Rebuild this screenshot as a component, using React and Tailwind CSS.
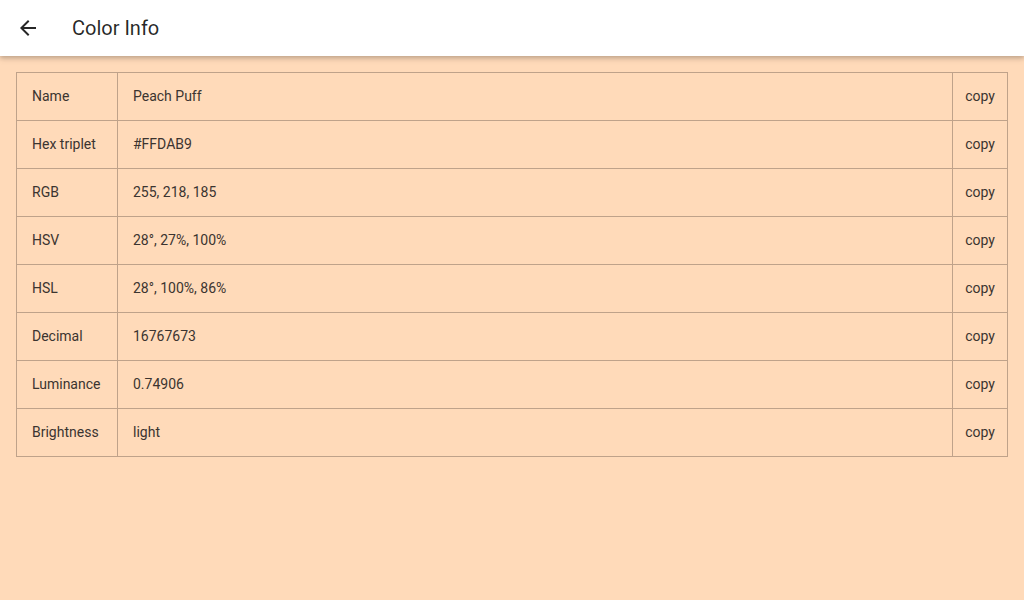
const rows = [
  ['Name', 'Peach Puff'],
  ['Hex triplet', '#FFDAB9'],
  ['RGB', '255, 218, 185'],
  ['HSV', '28°, 27%, 100%'],
  ['HSL', '28°, 100%, 86%'],
  ['Decimal', '16767673'],
  ['Luminance', '0.74906'],
  ['Brightness', 'light'],
];

export default function App() {
  return (
    <div className="w-[1024px] h-[600px] bg-[#ffdab9] flex flex-col overflow-hidden" style={{ fontFamily: 'Roboto, "Noto Sans", sans-serif' }}>
      {/* app bar */}
      <header className="relative z-10 h-14 shrink-0 bg-white flex items-center px-4 shadow-[0_2px_4px_rgba(0,0,0,0.18),0_4px_6px_rgba(0,0,0,0.08)]">
        <svg viewBox="0 0 24 24" className="w-6 h-6 fill-black/85">
          <path d="M20 11H7.83l5.59-5.59L12 4l-8 8 8 8 1.41-1.41L7.83 13H20v-2z" />
        </svg>
        <h1 className="ml-8 text-[20px] text-black/85">Color Info</h1>
      </header>

      <div className="p-4">
        <table className="w-full border-collapse table-fixed text-[14px] text-[#3b3430]">
          <colgroup>
            <col className="w-[101px]" />
            <col />
            <col className="w-[55px]" />
          </colgroup>
          <tbody>
            {rows.map(([label, value]) => (
              <tr key={label} className="h-12">
                <td className="border border-[#bfa28a] pl-[15px] pr-2">{label}</td>
                <td className="border border-[#bfa28a] pl-[15px] pr-2">{value}</td>
                <td className="border border-[#bfa28a] text-center">copy</td>
              </tr>
            ))}
          </tbody>
        </table>
      </div>
    </div>
  );
}
